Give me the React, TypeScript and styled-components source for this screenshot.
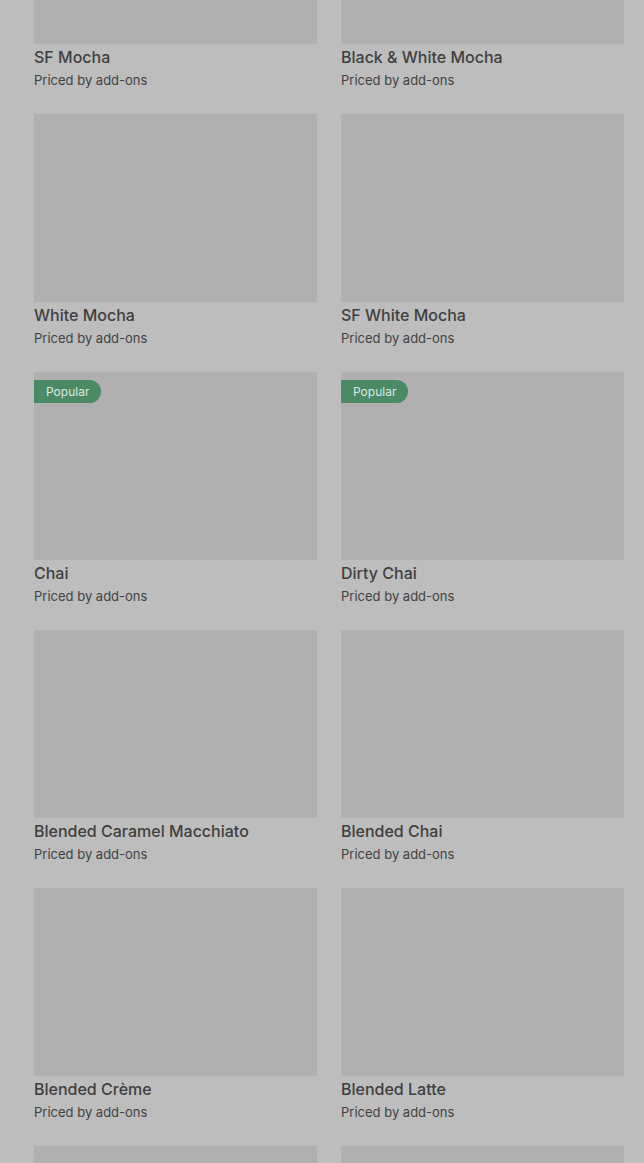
import React from "react";
import styled, { createGlobalStyle } from "styled-components";

const Global = createGlobalStyle`
  html, body { margin: 0; padding: 0; background: #bdbdbd; }
  body { font-family: Inter, "Noto Sans", sans-serif; }
`;

const Viewport = styled.div`
  height: 1163px;
  overflow: hidden;
  background: #bdbdbd;
`;

const Grid = styled.div`
  display: grid;
  grid-template-columns: 283px 283px;
  column-gap: 24px;
  row-gap: 25px;
  padding: 0 20px 0 34px;
  margin-top: -144px;
`;

const Card = styled.div`
  display: flex;
  flex-direction: column;
`;

const Thumb = styled.div`
  position: relative;
  height: 188px;
  background: #b0b0b0;
`;

const Badge = styled.span`
  position: absolute;
  top: 8px;
  left: 0;
  height: 23px;
  padding: 0 12px;
  display: flex;
  align-items: center;
  background: #4b8a65;
  color: #dfe9e2;
  font-size: 12px;
  border-radius: 0 12px 12px 0;
`;

const Title = styled.div`
  margin-top: 3px;
  font-size: 16px;
  line-height: 20px;
  font-weight: 500;
  color: #3f3f3f;
`;

const Sub = styled.div`
  margin-top: 4px;
  font-size: 13px;
  line-height: 18px;
  color: #424242;
`;

const items: { name: string; popular?: boolean }[] = [
  { name: "SF Mocha" },
  { name: "Black & White Mocha" },
  { name: "White Mocha" },
  { name: "SF White Mocha" },
  { name: "Chai", popular: true },
  { name: "Dirty Chai", popular: true },
  { name: "Blended Caramel Macchiato" },
  { name: "Blended Chai" },
  { name: "Blended Crème" },
  { name: "Blended Latte" },
  { name: "" },
  { name: "" },
];

export default function App() {
  return (
    <Viewport>
      <Global />
      <Grid>
        {items.map((it, i) => (
          <Card key={i}>
            <Thumb>{it.popular && <Badge>Popular</Badge>}</Thumb>
            {it.name && (
              <>
                <Title>{it.name}</Title>
                <Sub>Priced by add-ons</Sub>
              </>
            )}
          </Card>
        ))}
      </Grid>
    </Viewport>
  );
}
